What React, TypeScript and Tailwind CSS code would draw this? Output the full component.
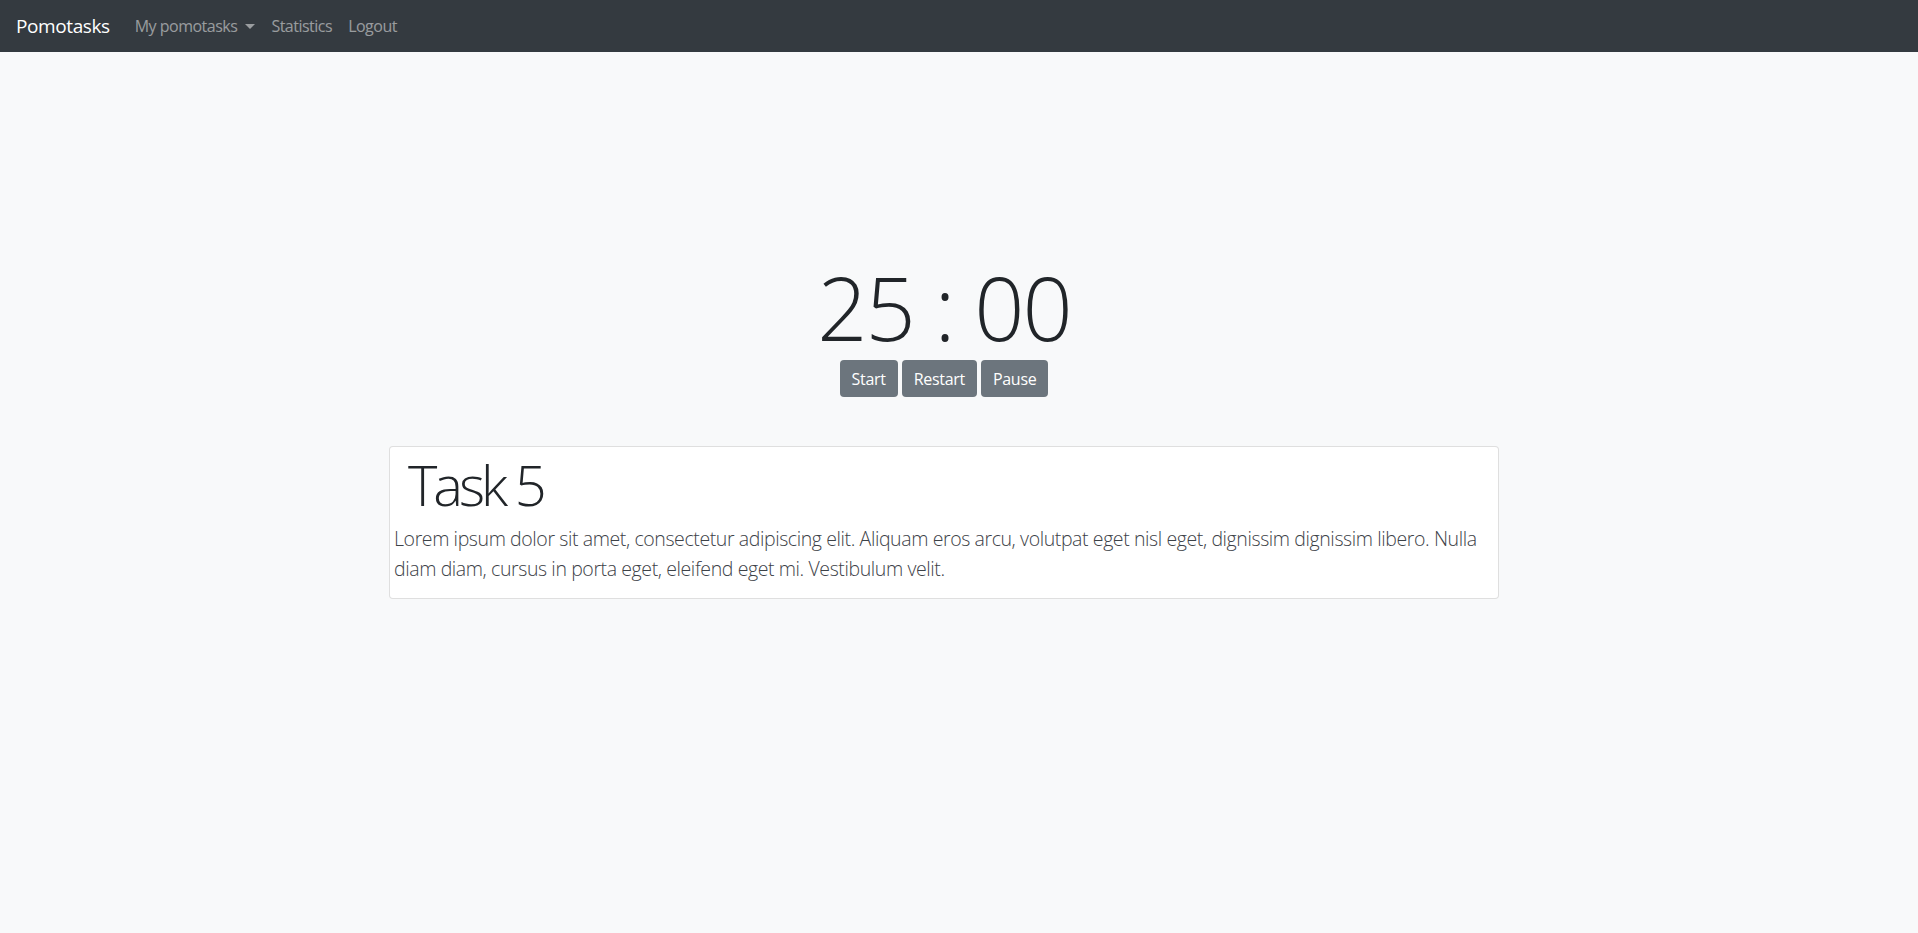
const navLink = "text-[16px] tracking-[-0.5px] text-white/50 hover:text-white/75";
const btn = "h-[37px] px-3 rounded bg-[#6c757d] text-white text-[16px] tracking-[-0.3px]";

export default function App() {
  return (
    <div className="min-h-[933px] bg-[#f8f9fa] font-['Open_Sans',sans-serif] text-[#212529]">
      <nav className="h-[52px] bg-[#343a40] flex items-center px-4">
        <span className="text-[19px] tracking-[-0.4px] text-white mr-[25px]">Pomotasks</span>
        <div className="flex items-center gap-4">
          <span className={navLink + " flex items-center"}>
            My pomotasks
            <span className="ml-[8px] inline-block w-0 h-0 border-x-[5px] border-x-transparent border-t-[5px] border-t-white/50" />
          </span>
          <span className={navLink}>Statistics</span>
          <span className={navLink}>Logout</span>
        </div>
      </nav>

      <main className="ml-[374px] w-[1140px] px-[15px]">
        <div className="mt-[193px] flex flex-col items-center">
          <div className="pt-[10px] text-[88px] leading-[105px] font-light tracking-[-2px]">25 : 00</div>
          <div className="flex gap-[4px]">
            <button className={btn}>Start</button>
            <button className={btn}>Restart</button>
            <button className={btn}>Pause</button>
          </div>
        </div>

        <div className="mt-[49px] bg-white border border-black/[0.125] rounded p-1">
          <h1 className="text-[56px] leading-[1.2] font-light tracking-[-4px] mb-[6px] pl-[14px]">Task 5</h1>
          <p className="text-[19.5px] leading-[30px] font-light tracking-[-0.4px] text-[#3d4248] mb-[10px]">
            Lorem ipsum dolor sit amet, consectetur adipiscing elit. Aliquam eros arcu, volutpat eget nisl eget, dignissim dignissim libero. Nulla diam diam, cursus in porta eget, eleifend eget mi. Vestibulum velit.
          </p>
        </div>
      </main>
    </div>
  );
}
